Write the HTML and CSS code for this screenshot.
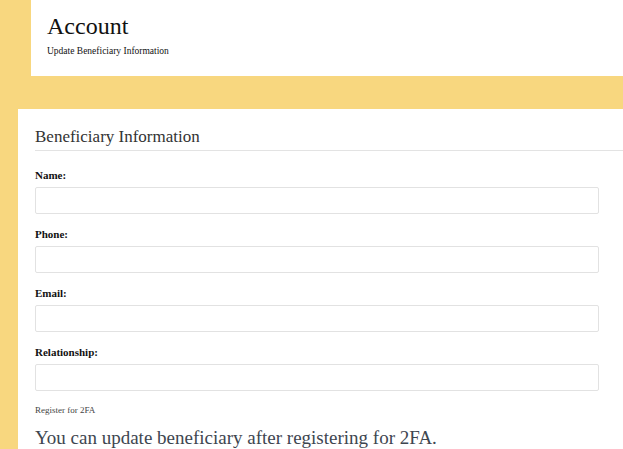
FILE: index.html
```html
<!DOCTYPE html>
<html>
<head>
<meta charset="utf-8">
<link rel="stylesheet" href="styles.css">
</head>
<body>
<div class="page">
  <header class="header">
    <h1 class="header-title">Account</h1>
    <p class="header-sub">Update Beneficiary Information</p>
  </header>
  <section class="card">
    <h2 class="card-title">Beneficiary Information</h2>
    <form class="form">
      <div class="field">
        <label class="field-label">Name:</label>
        <input class="field-input" type="text">
      </div>
      <div class="field">
        <label class="field-label">Phone:</label>
        <input class="field-input" type="text">
      </div>
      <div class="field">
        <label class="field-label">Email:</label>
        <input class="field-input" type="text">
      </div>
      <div class="field">
        <label class="field-label">Relationship:</label>
        <input class="field-input" type="text">
      </div>
    </form>
    <p class="register">Register for 2FA</p>
    <p class="notice">You can update beneficiary after registering for 2FA.</p>
  </section>
</div>
</body>
</html>
```

FILE: styles.css
```css
html, body {
  margin: 0;
  padding: 0;
  background: #f8d77f;
  font-family: "Liberation Serif", "Times New Roman", serif;
  color: #111;
  overflow: hidden;
}

.page {
  display: flex;
  flex-direction: column;
  height: 449px;
}

.header {
  margin-left: 31px;
  height: 76px;
  background: #fff;
  padding: 12px 16px 0;
  box-sizing: border-box;
}

.header-title {
  margin: 0;
  font-size: 24px;
  line-height: 28px;
  font-weight: normal;
  color: #111;
}

.header-sub {
  margin: 5px 0 0;
  font-size: 9.5px;
  line-height: 12px;
  color: #111;
}

.card {
  margin-top: 33px;
  margin-left: 18px;
  flex: 1;
  background: #fff;
  padding: 18px 0 0 17px;
}

.card-title {
  margin: 0;
  font-size: 17px;
  line-height: 20px;
  font-weight: normal;
  color: #333;
  padding-bottom: 3px;
  border-bottom: 1px solid #e3e3e3;
}

.form {
  margin: 17px 24px 0 0;
  display: flex;
  flex-direction: column;
  gap: 13px;
}

.field {
  display: flex;
  flex-direction: column;
  gap: 4px;
}

.field-label {
  font-size: 11px;
  line-height: 15px;
  font-weight: bold;
  color: #111;
}

.field-input {
  margin: 0;
  height: 27px;
  box-sizing: border-box;
  border: 1px solid #e2e2e2;
  border-radius: 2px;
  background: #fff;
  padding: 0 6px;
}

.register {
  margin: 13px 0 0;
  font-size: 9px;
  line-height: 12px;
  color: #444;
}

.notice {
  margin: 11px 0 0;
  font-size: 19px;
  line-height: 22px;
  color: #3e4650;
}
```
